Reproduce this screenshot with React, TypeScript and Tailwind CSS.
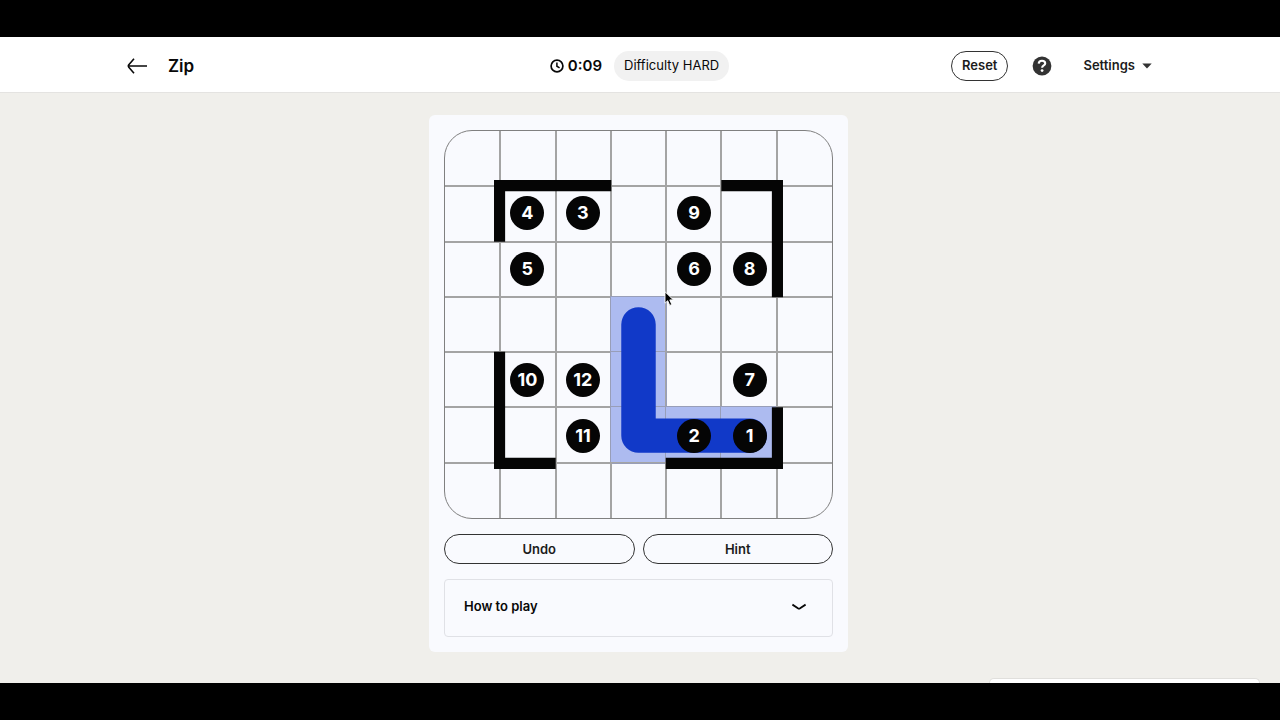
import { useState } from "react"

const SIZE = 7

// cell index -> number shown in the cell
const numbers: Record<number, number> = {
    8: 4,
    9: 3,
    11: 9,
    15: 5,
    18: 6,
    19: 8,
    29: 10,
    30: 12,
    33: 7,
    37: 11,
    39: 2,
    40: 1,
}

const visited = [24, 31, 38, 39, 40]

// walls follow the grid lines, in cell units
const walls = ["M3.01 1H1V2.01", "M4.99 1H6V3.01", "M1 3.99V6H2.01", "M3.99 6H6V4.99"]

function ClockIcon() {
    return (
        <svg width="14" height="14" viewBox="0 0 14 14" fill="none" stroke="currentColor" aria-hidden="true">
            <circle cx="7" cy="7" r="5.9" strokeWidth="1.7" />
            <path d="M6.9 3.6V7.2L9.6 8.8" strokeWidth="1.5" />
        </svg>
    )
}

function BackIcon() {
    return (
        <svg width="20" height="16" viewBox="0 0 20 16" fill="none" stroke="currentColor" strokeWidth="1.6" aria-hidden="true">
            <path d="M20 8H1.6M7 .8L1.8 6.8Q.9 8 1.8 9.2L7 15.2" />
        </svg>
    )
}

function HelpIcon() {
    return (
        <svg width="20" height="20" viewBox="0 0 20 20" aria-hidden="true">
            <circle cx="10" cy="10" r="9.4" fill="#333" />
            <path d="M6.7 7.6C6.8 5.7 8.2 4.8 10 4.8C11.9 4.8 13.2 5.8 13.2 7.4C13.2 9.5 10.1 9.3 10.1 11.8" fill="none" stroke="#fff" strokeWidth="2.1" />
            <circle cx="10.1" cy="14.6" r="1.4" fill="#fff" />
        </svg>
    )
}

function Header() {
    return (
        <header className="h-14 pt-0.5 pr-px bg-white border-b border-[#e4e3e1]">
            <div className="max-w-[1025px] h-full mx-auto grid grid-cols-[1fr_auto_1fr] items-center">
                <div className="flex items-center gap-[21px]">
                    <button aria-label="Back">
                        <BackIcon />
                    </button>
                    <h1 className="text-[17px] leading-6 font-semibold">Zip</h1>
                </div>
                <div className="flex items-center gap-3">
                    <div className="flex items-center gap-1 text-[15px] font-semibold">
                        <ClockIcon />
                        <span className="pt-px">0:09</span>
                    </div>
                    <span className="h-[30px] px-2.5 pt-px flex items-center rounded-full bg-[#f1f1f1] text-[13px]">
                        Difficulty HARD
                    </span>
                </div>
                <div className="flex items-center justify-end text-[#1c1c1c]">
                    <button className="h-[30px] px-2.5 pt-px border border-[#333] rounded-full text-[13px] font-semibold">
                        Reset
                    </button>
                    <button className="ml-6" aria-label="Help">
                        <HelpIcon />
                    </button>
                    <button className="ml-[31px] pt-px flex items-center gap-[7px] text-[13px] font-semibold">
                        Settings
                        <svg width="10" height="6" viewBox="0 0 10 6" fill="#333" aria-hidden="true">
                            <path d="M.3 .5H9.7L5 5.5Z" />
                        </svg>
                    </button>
                </div>
            </div>
        </header>
    )
}

function Board() {
    return (
        <div className="relative">
            <div className="aspect-square grid grid-cols-7 grid-rows-7 rounded-[28px] border border-[#808080] overflow-hidden">
                {Array.from({ length: SIZE * SIZE }, (_, i) => (
                    <div
                        key={i}
                        className={
                            visited.includes(i)
                                ? "bg-[#adbbf0] shadow-[0_0_0_1px_#989eb8]"
                                : "shadow-[0_0_0_1px_#a4a4a4]"
                        }
                    />
                ))}
            </div>
            <svg className="absolute inset-0 w-full h-full" viewBox="0 0 7 7" fill="none" aria-hidden="true">
                <path d="M5.5 5.5H3.5V3.5" stroke="#1139c8" strokeWidth="0.62" strokeLinecap="round" strokeLinejoin="round" />
                {walls.map((d) => (
                    <path key={d} d={d} stroke="#050505" strokeWidth="0.2" />
                ))}
            </svg>
            <div className="absolute inset-0 grid grid-cols-7 grid-rows-7">
                {Array.from({ length: SIZE * SIZE }, (_, i) => (
                    <div key={i} className="flex items-center justify-center">
                        {numbers[i] && (
                            <span className="size-[34px] rounded-full bg-[#050505] text-white text-lg font-bold flex items-center justify-center">
                                {numbers[i]}
                            </span>
                        )}
                    </div>
                ))}
            </div>
            <svg className="absolute left-[220px] top-[161px]" width="11" height="16" viewBox="0 0 11 16" aria-hidden="true">
                <path d="M1 .8V12.2L3.7 9.7L5.7 14.4L7.8 13.5L5.8 8.9H9.4Z" fill="#000" stroke="#fff" strokeWidth=".9" />
            </svg>
        </div>
    )
}

export default function App() {
    const [open, setOpen] = useState(false)

    return (
        <div className="min-h-screen flex flex-col bg-[#f0efeb] text-[#080808] font-['Inter',sans-serif]">
            <div className="h-[37px] bg-black" />
            <Header />
            <main className="relative flex-1 pt-[22px] pb-[31px] pr-[3px] overflow-hidden">
                <section className="max-w-[419px] mx-auto p-[15px] rounded-md bg-[#f9fafe]">
                    <Board />
                    <div className="mt-[15px] grid grid-cols-2 gap-2 text-[13px] font-semibold text-[#1c1c1c]">
                        <button className="h-[30px] pt-0.5 border border-[#333] rounded-full">Undo</button>
                        <button className="h-[30px] pt-0.5 border border-[#333] rounded-full">Hint</button>
                    </div>
                    <button
                        className="mt-[15px] w-full h-[58px] pl-[19px] pr-[26px] pb-0.5 flex items-center justify-between border border-[#e0e1e6] rounded-[4px] text-[13px] font-semibold"
                        aria-expanded={open}
                        onClick={() => setOpen(!open)}
                    >
                        How to play
                        <svg width="14" height="8" viewBox="0 0 14 8" fill="none" stroke="currentColor" strokeWidth="1.8" aria-hidden="true">
                            <path d="M.4 1.6L5.9 5.3Q7 6 8.1 5.3L13.6 1.6" />
                        </svg>
                    </button>
                </section>
                <div className="absolute right-5 bottom-0 w-[271px] h-[5px] rounded-t-lg bg-white border-t border-x border-[#e0dfdc]" />
            </main>
            <div className="h-[37px] bg-black" />
        </div>
    )
}
